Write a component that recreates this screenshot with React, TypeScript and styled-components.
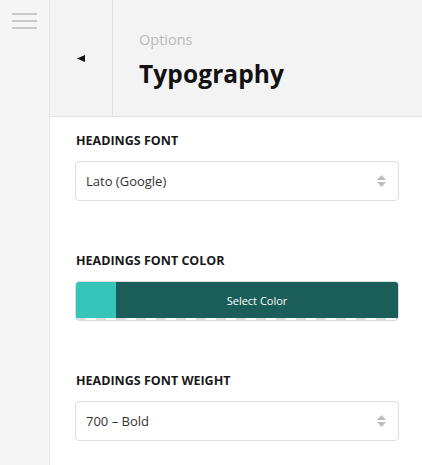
import React from "react";
import styled, { createGlobalStyle } from "styled-components";

const GlobalStyle = createGlobalStyle`
  html, body {
    margin: 0;
    padding: 0;
    background: #ffffff;
    font-family: "Open Sans", "Noto Sans", sans-serif;
  }
`;

const Page = styled.div`
  display: flex;
  width: 422px;
  height: 465px;
  overflow: hidden;
`;

const Sidebar = styled.div`
  width: 50px;
  flex-shrink: 0;
  background: #f5f5f5;
  border-right: 1px solid #e6e6e6;
  display: flex;
  justify-content: center;
  padding-top: 13px;
  padding-right: 1px;
  box-sizing: border-box;
`;

const Hamburger = styled.div`
  display: flex;
  flex-direction: column;
  gap: 5px;
  width: 25px;
  height: 16px;

  span {
    display: block;
    height: 2px;
    background: #c9c9c9;
  }
`;

const Main = styled.div`
  flex: 1;
  display: flex;
  flex-direction: column;
`;

const Header = styled.div`
  display: flex;
  height: 117px;
  background: #f3f3f3;
  border-bottom: 1px solid #e3e3e3;
  box-sizing: border-box;
`;

const BackButton = styled.div`
  width: 63px;
  border-right: 1px solid #e0e0e0;
  display: flex;
  align-items: center;
  justify-content: center;
  box-sizing: border-box;
`;

const TitleBlock = styled.div`
  display: flex;
  flex-direction: column;
  padding: 30px 0 0 26px;
`;

const Crumb = styled.div`
  font-size: 14.5px;
  color: #b9b9b9;
  line-height: 20px;
`;

const Title = styled.h1`
  margin: 8px 0 0;
  font-size: 24.5px;
  font-weight: 700;
  color: #111;
  line-height: 32px;
  letter-spacing: 0.1px;
`;

const Content = styled.div`
  padding: 16px 23px 0 25px;
  display: flex;
  flex-direction: column;
  gap: 52px;
`;

const Field = styled.div`
  display: flex;
  flex-direction: column;
  gap: 12px;
`;

const Label = styled.div`
  font-size: 12.5px;
  font-weight: 700;
  color: #1a1a1a;
  line-height: 16px;
  padding-left: 1px;
`;

const SelectBox = styled.div`
  height: 40px;
  border: 1px solid #dedede;
  border-radius: 4px;
  display: flex;
  align-items: center;
  justify-content: space-between;
  padding: 0 12px 0 10px;
  box-sizing: border-box;
  font-size: 13px;
  color: #333;
`;

const Arrows = styled.div`
  display: flex;
  flex-direction: column;
  gap: 2px;
`;

const ColorButton = styled.div`
  height: 40px;
  border: 1px solid #dadada;
  border-radius: 4px;
  display: flex;
  overflow: hidden;
  box-sizing: border-box;
  background: repeating-linear-gradient(
    90deg,
    #dcdcdc 0 10px,
    #ffffff 10px 20px
  );
`;

const Swatch = styled.div<{ $color: string }>`
  width: 40px;
  height: 36px;
  background: ${(p) => p.$color};
`;

const ColorLabel = styled.div<{ $color: string }>`
  flex: 1;
  height: 36px;
  background: ${(p) => p.$color};
  color: #fff;
  font-size: 11px;
  display: flex;
  align-items: center;
  justify-content: center;
`;

const SortArrows = () => (
  <Arrows>
    <svg width="9" height="5" viewBox="0 0 9 5">
      <path d="M4.5 0 L9 5 L0 5 Z" fill="#bdbdbd" />
    </svg>
    <svg width="9" height="5" viewBox="0 0 9 5">
      <path d="M0 0 L9 0 L4.5 5 Z" fill="#bdbdbd" />
    </svg>
  </Arrows>
);

const App: React.FC = () => {
  return (
    <>
      <GlobalStyle />
      <Page>
        <Sidebar>
          <Hamburger>
            <span />
            <span />
            <span />
          </Hamburger>
        </Sidebar>
        <Main>
          <Header>
            <BackButton>
              <svg width="8" height="7" viewBox="0 0 8 7">
                <path d="M0 3.5 L8 0 L8 7 Z" fill="#111" />
              </svg>
            </BackButton>
            <TitleBlock>
              <Crumb>Options</Crumb>
              <Title>Typography</Title>
            </TitleBlock>
          </Header>
          <Content>
            <Field>
              <Label>HEADINGS FONT</Label>
              <SelectBox>
                <span>Lato (Google)</span>
                <SortArrows />
              </SelectBox>
            </Field>
            <Field>
              <Label>HEADINGS FONT COLOR</Label>
              <ColorButton>
                <Swatch $color="#35c5b9" />
                <ColorLabel $color="#1b5e59">Select Color</ColorLabel>
              </ColorButton>
            </Field>
            <Field>
              <Label>HEADINGS FONT WEIGHT</Label>
              <SelectBox>
                <span>700 – Bold</span>
                <SortArrows />
              </SelectBox>
            </Field>
          </Content>
        </Main>
      </Page>
    </>
  );
};

export default App;
